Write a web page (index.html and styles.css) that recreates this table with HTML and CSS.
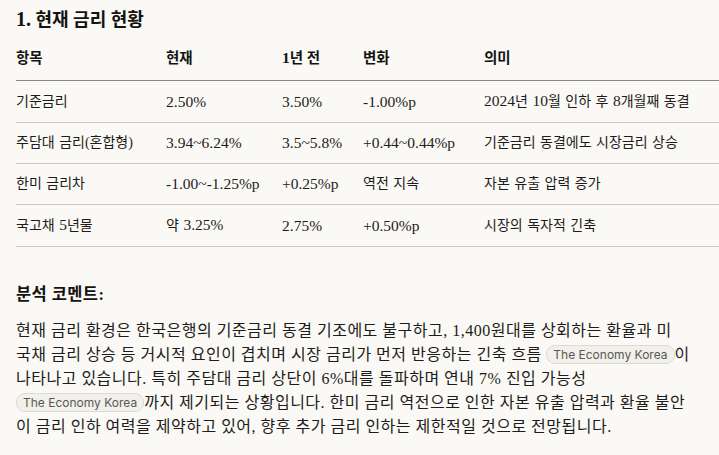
FILE: index.html
```html
<!DOCTYPE html>
<html lang="ko">
<head>
<meta charset="utf-8">
<link rel="stylesheet" href="styles.css">
</head>
<body>
<div class="doc">
  <h2 class="title"><span class="n">1.</span> 현재 금리 현황</h2>
  <table class="rates">
    <thead>
      <tr>
        <th class="c1">항목</th>
        <th class="c2">현재</th>
        <th class="c3"><span class="n">1</span>년 전</th>
        <th class="c4">변화</th>
        <th class="c5">의미</th>
      </tr>
    </thead>
    <tbody>
      <tr><td>기준금리</td><td class="n">2.50%</td><td class="n">3.50%</td><td class="n">-1.00%p</td><td><span class="n">2024</span>년 <span class="n">10</span>월 인하 후 <span class="n">8</span>개월째 동결</td></tr>
      <tr><td>주담대 금리(혼합형)</td><td class="n">3.94~6.24%</td><td class="n">3.5~5.8%</td><td class="n">+0.44~0.44%p</td><td>기준금리 동결에도 시장금리 상승</td></tr>
      <tr><td>한미 금리차</td><td class="n">-1.00~-1.25%p</td><td class="n">+0.25%p</td><td>역전 지속</td><td>자본 유출 압력 증가</td></tr>
      <tr><td>국고채 <span class="n">5</span>년물</td><td>약 <span class="n">3.25%</span></td><td class="n">2.75%</td><td class="n">+0.50%p</td><td>시장의 독자적 긴축</td></tr>
    </tbody>
  </table>
  <h3 class="sub">분석 코멘트:</h3>
  <p class="body">현재 금리 환경은 한국은행의 기준금리 동결 기조에도 불구하고, 1,400원대를 상회하는 환율과 미<br>국채 금리 상승 등 거시적 요인이 겹치며 시장 금리가 먼저 반응하는 긴축 흐름 <span class="chip">The Economy Korea</span>이<br>나타나고 있습니다. 특히 주담대 금리 상단이 6%대를 돌파하며 연내 7% 진입 가능성<br><span class="chip">The Economy Korea</span>까지 제기되는 상황입니다. 한미 금리 역전으로 인한 자본 유출 압력과 환율 불안<br>이 금리 인하 여력을 제약하고 있어, 향후 추가 금리 인하는 제한적일 것으로 전망됩니다.</p>
</div>
</body>
</html>
```

FILE: styles.css
```css
html, body {
  margin: 0;
  padding: 0;
  background: #faf9f5;
}
.doc {
  padding: 6px 0 0 16px;
  color: #1d1c1a;
  font-family: "Liberation Serif", "Noto Sans CJK KR", serif;
}
.title {
  margin: 0 0 4px;
  font-size: 18px;
  line-height: 26px;
  font-weight: 700;
  color: #141312;
}
.title .n {
  font-size: 20px;
  line-height: 26px;
}
.rates {
  width: 100%;
  border-collapse: collapse;
  font-size: 14px;
  table-layout: fixed;
}
.rates .n {
  font-size: 15.5px;
  line-height: 20px;
}
.rates th {
  text-align: left;
  font-weight: 700;
  font-size: 14.5px;
  line-height: 20px;
  height: 20px;
  padding: 11px 0 12px;
  border-bottom: 1px solid #8a8886;
  color: #141312;
}
.rates td {
  line-height: 20px;
  height: 20px;
  padding: 10px 0;
  border-bottom: 1px solid #c9c7c2;
  white-space: nowrap;
  word-spacing: 1px;
}
.c1 { width: 150px; }
.c2 { width: 116px; }
.c3 { width: 81px; }
.c4 { width: 121px; }
.sub {
  margin: 36px 0 12px;
  font-size: 16.5px;
  line-height: 24px;
  letter-spacing: 0.4px;
  font-weight: 700;
  color: #141312;
}
.body {
  margin: 0;
  padding-right: 4px;
  font-size: 16px;
  line-height: 24px;
  letter-spacing: 0.5px;
}
.chip {
  display: inline-block;
  font-family: "Inter", "Noto Sans", sans-serif;
  font-size: 12px;
  line-height: 17px;
  padding: 0 6px;
  border: 1px solid #dcdad3;
  border-radius: 9px;
  background: #f1f0eb;
  color: #5a5853;
  letter-spacing: 0;
  vertical-align: 1px;
}
```
